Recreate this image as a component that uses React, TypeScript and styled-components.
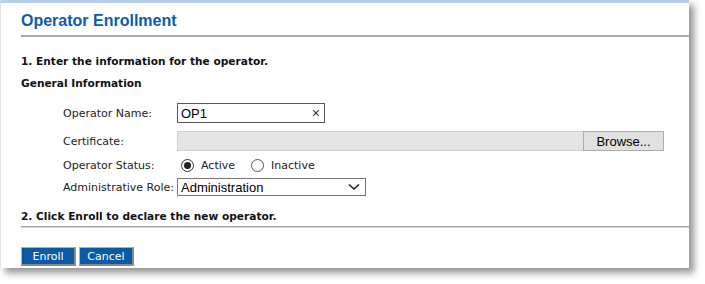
import React from 'react'
import styled, { createGlobalStyle } from 'styled-components'

const GlobalStyle = createGlobalStyle`
    html, body {
        margin: 0;
        padding: 0;
        background: #ffffff;
    }
    body {
        font-family: "DejaVu Sans", Verdana, sans-serif;
        padding-bottom: 16px;
    }
`

const Panel = styled.div`
    width: 689px;
    height: 268px;
    box-sizing: border-box;
    background: #ffffff;
    border-top: 3px solid #b7cfec;
    border-left: 1px solid #e4e4e4;
    box-shadow: 5px 5px 7px rgba(0, 0, 0, 0.42);
    padding: 7px 0 0 20px;
`

const Title = styled.h1`
    margin: 0;
    font-family: "Liberation Sans", Arial, sans-serif;
    font-size: 16px;
    font-weight: bold;
    line-height: 22px;
    color: #0b5cab;
    padding-bottom: 3px;
    border-bottom: 2px solid #a8a8a8;
`

const Step = styled.div<{ $top: number }>`
    margin-top: ${p => p.$top}px;
    font-size: 10.6px;
    font-weight: bold;
    color: #111;
    line-height: 14px;
`

const Section = styled.div`
    margin-top: 8px;
    font-size: 10.6px;
    font-weight: bold;
    color: #111;
    line-height: 14px;
`

const Form = styled.div`
    margin: 13px 0 0 42px;
`

const Row = styled.div<{ $top?: number; $height: number }>`
    display: flex;
    align-items: center;
    height: ${p => p.$height}px;
    margin-top: ${p => p.$top ?? 0}px;
`

const Label = styled.div`
    width: 114px;
    flex-shrink: 0;
    font-size: 11px;
    color: #222;
    white-space: nowrap;
`

const TextBox = styled.div`
    width: 148px;
    height: 20px;
    box-sizing: border-box;
    border: 1px solid #5a5a5a;
    display: flex;
    align-items: center;
    justify-content: space-between;
    padding: 0 4px 0 3px;
    font-family: "Liberation Sans", Arial, sans-serif;
    font-size: 13px;
    color: #000;
`

const Clear = styled.span`
    font-size: 14px;
    color: #333;
    line-height: 1;
`

const FileRow = styled.div`
    display: flex;
    height: 20px;
`

const FileField = styled.div`
    width: 406px;
    box-sizing: border-box;
    background: #e5e5e5;
    border: 1px solid #d2d2d2;
    border-right: none;
`

const BrowseButton = styled.div`
    width: 81px;
    box-sizing: border-box;
    background: #e1e1e1;
    border: 1px solid #adadad;
    display: flex;
    align-items: center;
    justify-content: center;
    font-family: "Liberation Sans", Arial, sans-serif;
    font-size: 13px;
    color: #000;
`

const RadioGroup = styled.div`
    display: flex;
    align-items: center;
    padding-left: 4px;
`

const RadioOption = styled.label`
    display: flex;
    align-items: center;
    font-size: 11px;
    color: #222;
    margin-right: 16px;
`

const RadioCircle = styled.span<{ $checked?: boolean }>`
    width: 13px;
    height: 13px;
    box-sizing: border-box;
    border-radius: 50%;
    border: 1px solid ${p => (p.$checked ? '#333' : '#555')};
    margin-right: 7px;
    display: flex;
    align-items: center;
    justify-content: center;

    &::after {
        content: '';
        width: 7px;
        height: 7px;
        border-radius: 50%;
        background: ${p => (p.$checked ? '#222' : 'transparent')};
    }
`

const Select = styled.div`
    width: 189px;
    height: 18px;
    box-sizing: border-box;
    border: 1px solid #767676;
    display: flex;
    align-items: center;
    justify-content: space-between;
    padding: 0 5px 0 3px;
    font-family: "Liberation Sans", Arial, sans-serif;
    font-size: 13px;
    color: #000;
`

const Divider = styled.div`
    margin-top: 3px;
    border-top: 1px solid #a0a0a0;
    border-bottom: 1px solid #d6d6d6;
`

const Actions = styled.div`
    display: flex;
    gap: 3px;
    margin-top: 19px;
`

const ActionButton = styled.div`
    width: 55px;
    height: 19px;
    box-sizing: border-box;
    background: #0b5aa6;
    border-top: 1px solid #9bb4d2;
    border-left: 1px solid #9bb4d2;
    border-right: 2px solid #8a8a8a;
    border-bottom: 2px solid #8a8a8a;
    color: #ffffff;
    font-size: 11px;
    display: flex;
    align-items: center;
    justify-content: center;
`

const Chevron = () => (
    <svg width="12" height="8" viewBox="0 0 12 8">
        <path d="M1 1.5 L6 6 L11 1.5" fill="none" stroke="#222" strokeWidth="1.6" />
    </svg>
)

const App = () => {
    return (
        <>
            <GlobalStyle />
            <Panel>
                <Title>Operator Enrollment</Title>

                <Step $top={17}>1. Enter the information for the operator.</Step>
                <Section>General Information</Section>

                <Form>
                    <Row $height={20}>
                        <Label>Operator Name:</Label>
                        <TextBox>
                            <span>OP1</span>
                            <Clear>×</Clear>
                        </TextBox>
                    </Row>

                    <Row $height={20} $top={8}>
                        <Label>Certificate:</Label>
                        <FileRow>
                            <FileField />
                            <BrowseButton>Browse...</BrowseButton>
                        </FileRow>
                    </Row>

                    <Row $height={17} $top={6}>
                        <Label>Operator Status:</Label>
                        <RadioGroup>
                            <RadioOption>
                                <RadioCircle $checked />
                                Active
                            </RadioOption>
                            <RadioOption>
                                <RadioCircle />
                                Inactive
                            </RadioOption>
                        </RadioGroup>
                    </Row>

                    <Row $height={18} $top={4}>
                        <Label>Administrative Role:</Label>
                        <Select>
                            <span>Administration</span>
                            <Chevron />
                        </Select>
                    </Row>
                </Form>

                <Step $top={13}>2. Click Enroll to declare the new operator.</Step>
                <Divider />

                <Actions>
                    <ActionButton>Enroll</ActionButton>
                    <ActionButton>Cancel</ActionButton>
                </Actions>
            </Panel>
        </>
    )
}

export default App
